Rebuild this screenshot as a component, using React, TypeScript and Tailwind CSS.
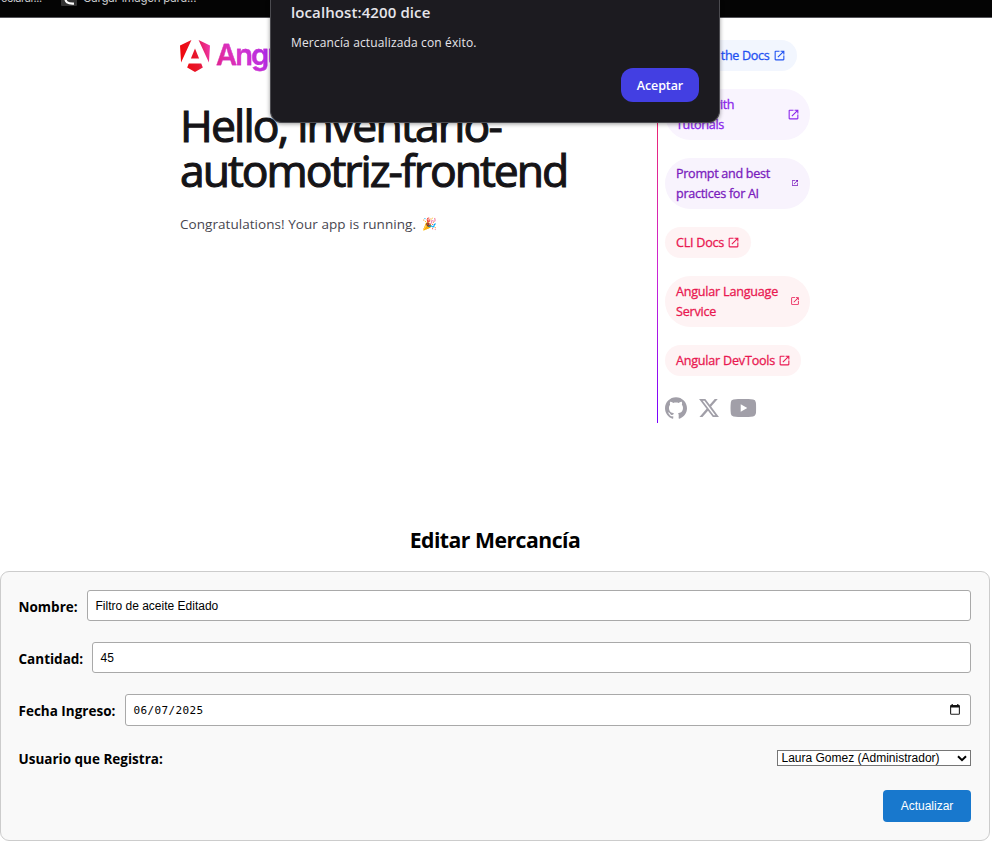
import React from "react";

const OPEN =
  "M200-120q-33 0-56.5-23.5T120-200v-560q0-33 23.5-56.5T200-840h280v80H200v560h560v-280h80v280q0 33-23.5 56.5T760-120H200Zm188-212-56-56 372-372H560v-80h280v280h-80v-144L388-332Z";

function OpenIcon({ size }: { size: number }) {
  return (
    <svg width={size} height={size} viewBox="0 -960 960 960" fill="currentColor" className="mb-px shrink-0">
      <path d={OPEN} />
    </svg>
  );
}

type PillProps = { lines: string[]; box: string; icon: number; text?: string };

function Pill({ lines, box, icon, text = "tracking-[-0.220px]" }: PillProps) {
  return (
    <a className={`flex items-center justify-between rounded-[26px] pl-[11px] ${box}`}>
      <span className={`whitespace-nowrap text-[12.6px] leading-[20px] [-webkit-text-stroke:0.3px_currentColor] ${text}`}>
        {lines.map((l) => (
          <span key={l} className="block">{l}</span>
        ))}
      </span>
      <OpenIcon size={icon} />
    </a>
  );
}

function Socials() {
  return (
    <div className="mt-[21px] flex h-[22px] items-center text-[#a19fa8]">
      <svg width="22" height="22" viewBox="0 0 24.61 24" fill="currentColor">
        <path d="M12.3047 0C5.50634 0 0 5.50942 0 12.3047C0 17.7423 3.52529 22.3535 8.41332 23.9787C9.02856 24.0946 9.25414 23.7142 9.25414 23.3871C9.25414 23.0949 9.24389 22.3207 9.23876 21.2953C5.81601 22.0377 5.09414 19.6444 5.09414 19.6444C4.53427 18.2243 3.72524 17.8449 3.72524 17.8449C2.61064 17.082 3.81137 17.0973 3.81137 17.0973C5.04697 17.1835 5.69604 18.3647 5.69604 18.3647C6.79321 20.2463 8.57636 19.7029 9.27978 19.3881C9.39052 18.5924 9.70736 18.0499 10.0591 17.7423C7.32641 17.4347 4.45429 16.3765 4.45429 11.6618C4.45429 10.3185 4.9311 9.22133 5.72065 8.36C5.58222 8.04931 5.16694 6.79833 5.82831 5.10337C5.82831 5.10337 6.85883 4.77319 9.2121 6.36459C10.1965 6.09082 11.2424 5.95546 12.2883 5.94931C13.3342 5.95546 14.3801 6.09082 15.3644 6.36459C17.7023 4.77319 18.7328 5.10337 18.7328 5.10337C19.3942 6.79833 18.9789 8.04931 18.8559 8.36C19.6403 9.22133 20.1171 10.3185 20.1171 11.6618C20.1171 16.3888 17.2409 17.4296 14.5031 17.7321C14.9338 18.1012 15.3337 18.8559 15.3337 20.0084C15.3337 21.6552 15.3183 22.978 15.3183 23.3779C15.3183 23.7009 15.5336 24.0854 16.1642 23.9623C21.0871 22.3484 24.6094 17.7341 24.6094 12.3047C24.6094 5.50942 19.0999 0 12.3047 0Z" />
      </svg>
      <svg width="20" height="18" viewBox="1.254 2.25 21.57 19.5" fill="currentColor" className="ml-[12px]">
        <path d="M18.244 2.25h3.308l-7.227 8.26 8.502 11.24H16.17l-5.214-6.817L4.99 21.75H1.68l7.73-8.835L1.254 2.25H8.08l4.713 6.231zm-1.161 17.52h1.833L7.084 4.126H5.117z" />
      </svg>
      <svg width="26" height="18" viewBox="0 0 26 18" fill="currentColor" className="ml-[11px] translate-x-[0.300px]">
        <path fillRule="evenodd" d="M3.2.5C6 0 9.500 0 13 0s7 0 9.800.5A3.200 3.200 0 0 1 25.500 3.200Q26 6 26 9t-.5 5.800a3.200 3.200 0 0 1-2.700 2.700C20 18 16.500 18 13 18s-7 0-9.800-.5A3.200 3.200 0 0 1 .5 14.800Q0 12 0 9t.5-5.800A3.200 3.200 0 0 1 3.200.5ZM10.400 5.200v7.600L17 9Z" />
      </svg>
    </div>
  );
}

function TopBar() {
  return (
    <div className="flex h-[18px] overflow-hidden border-b border-[#55555a] bg-[#040404] text-[#c9c9cc]">
      <span className="-mt-[11px] w-[61px] whitespace-nowrap pl-px font-['Inter',sans-serif] text-[11px] leading-[18px] tracking-[-0.400px]">eclarar...</span>
      <span className="-mt-[10px] flex h-4 w-4 justify-center rounded-[1px] bg-[#333]">
        <svg width="16" height="16" viewBox="0 0 16 16" fill="none" stroke="#fff" strokeWidth="2.200">
          <path d="M4.500 7.500C4 12 6.500 14 13 13.600" />
        </svg>
      </span>
      <span className="-mt-[11px] ml-[6px] whitespace-nowrap font-['Inter',sans-serif] text-[11.500px] leading-[18px] tracking-[-0.200px]">Cargar imagen para...</span>
    </div>
  );
}

function Brand() {
  return (
    <div className="flex h-8 items-center">
      <svg width="30" height="32" viewBox="0.662 0 22.676 24" className="shrink-0">
        <defs>
          <linearGradient id="mark" x1="0" y1="0.300" x2="1" y2="0.100">
            <stop offset="0" stopColor="#f0060b" />
            <stop offset="0.500" stopColor="#e7182f" />
            <stop offset="0.780" stopColor="#e9277c" />
            <stop offset="1" stopColor="#f23bb5" />
          </linearGradient>
        </defs>
        <path fill="url(#mark)" d="M16.712 17.711H7.288l-1.204 2.916L12 24l5.916-3.373-1.204-2.916ZM14.692 0l7.832 16.855.814-12.856L14.692 0ZM9.308 0 .662 3.999l.814 12.856L9.308 0Zm-.405 13.930h6.198L12 6.396 8.903 13.930Z" />
      </svg>
      <span className="-mt-[3px] ml-[6px] bg-[linear-gradient(65deg,#e6217a_0%,#d935cc_28%,#9f28ee_60%)] bg-clip-text font-['Inter',sans-serif] text-[29px] font-semibold leading-[40px] tracking-[-1.900px] text-transparent [-webkit-text-stroke:0.3px_#cf2fcf]">
        Angular
      </span>
    </div>
  );
}

function Hero() {
  return (
    <main className="flex h-[512px] pl-[180px]">
      <div className="w-[477px] pt-[22px]">
        <Brand />
        <h1 className="mt-[30px] whitespace-nowrap text-[44.500px] leading-[45px] text-[#151417] [-webkit-text-stroke:1.1px_#151417]">
          <span className="block tracking-[-1.850px]">Hello, inventario-</span>
          <span className="block tracking-[-2.020px]">automotriz-frontend</span>
        </h1>
        <p className="mt-[22px] flex items-center whitespace-nowrap text-[13.500px] leading-[20px] text-[#48464f]">
          <span className="w-[242px] tracking-[0.050px]">Congratulations! Your app is running.</span>
          <span className="text-[12px]">🎉</span>
        </p>
      </div>
      <div className="mt-[22px] h-[383px] w-px bg-[linear-gradient(180deg,#f0060b_0%,#e9277c_25%,#cc26d5_60%,#7702ff_100%)]" />
      <div className="ml-[7px] mt-[22px] flex flex-col items-start gap-[18px]">
        <Pill lines={["Explore the Docs"]} box="h-[31px] w-[132px] pr-[11px] bg-[#f2f6fe] text-[#1f51f2]" icon={13} text="tracking-[-0.340px]" />
        <Pill lines={["Learn with", "Tutorials"]} box="h-[51px] w-[145px] pr-[10px] bg-[#f9f4fe] text-[#8b26ec]" icon={13} text="tracking-[-0.380px]" />
        <Pill lines={["Prompt and best", "practices for AI"]} box="h-[51px] w-[145px] pr-[11px] bg-[#f8f3fd] text-[#7a1cbd]" icon={8} text="tracking-[-0.300px]" />
        <Pill lines={["CLI Docs"]} box="h-[31px] w-[86px] pr-[11px] bg-[#fef3f4] text-[#e91951]" icon={13} text="tracking-[-0.250px]" />
        <Pill lines={["Angular Language", "Service"]} box="h-[51px] w-[145px] pr-[10px] bg-[#fef3f4] text-[#e91951]" icon={10} />
        <Pill lines={["Angular DevTools"]} box="h-[31px] w-[136px] pr-[10px] bg-[#fef3f4] text-[#e91951]" icon={13} />
        <div className="-mt-[18px]"><Socials /></div>
      </div>
    </main>
  );
}

function Dialog() {
  return (
    <div className="absolute left-[270px] top-0 h-[123px] w-[450px] rounded-b-[12px] border border-t-0 border-[#4b4b50] bg-[#1c1b20] px-5 text-[#e6e5ea] shadow-[0_1px_4px_rgba(0,0,0,0.4)]">
      <div className="pt-px text-[15px] font-semibold leading-[22px] tracking-[0.100px]">localhost:4200 dice</div>
      <div className="mt-[11px] text-[12px] leading-[18px] tracking-[0.140px]">Mercancía actualizada con éxito.</div>
      <div className="mt-[16px] flex justify-end">
        <button className="h-[34px] w-[78px] rounded-[12px] bg-[#433fe2] pt-[2px] text-[12.500px] font-semibold tracking-[-0.100px] text-white">Aceptar</button>
      </div>
    </div>
  );
}

const label = "-ml-[0.500px] mr-[9.500px] whitespace-nowrap pt-[2px] text-[13.500px] font-bold leading-[20px]";
const field =
  "flex flex-1 items-center rounded-[3px] border border-[#a9a9a9] bg-white pl-[7.500px] pr-[8px] font-['Liberation_Sans',Arial,sans-serif] text-[12px]";

function EditForm() {
  return (
    <section>
      <h2 className="w-[990px] text-center text-[21.200px] font-bold leading-[20px] tracking-[-0.500px]">Editar Mercancía</h2>
      <form className="mt-[21px] h-[270px] w-[990px] rounded-[9px] border border-[#ccc] bg-[#f9f9f9] px-[18px] pt-[18px]">
        <div className="flex h-[31px] items-center">
          <label className={`${label} w-[59px]`}>Nombre:</label>
          <div className={`${field} h-[31px]`}>Filtro de aceite Editado</div>
        </div>
        <div className="mt-[21px] flex h-[31px] items-center">
          <label className={`${label} w-[64px]`}>Cantidad:</label>
          <div className={`${field} h-[31px]`}>45</div>
        </div>
        <div className="mt-[21px] flex h-[32px] items-center">
          <label className={`${label} w-[97px]`}>Fecha Ingreso:</label>
          <div className={`${field} h-[32px] justify-between`}>
            <span className="pt-[2px] font-['DejaVu_Sans_Mono',monospace] text-[11px] tracking-[0.380px]">06/07/2025</span>
            <svg width="10" height="11" viewBox="0 0 10 11" fill="none" className="mb-px mr-[2px]">
              <rect x="0.600" y="1.600" width="8.800" height="8.600" rx="0.800" stroke="#222" strokeWidth="1.100" />
              <path d="M.5 1.200h9v2.300h-9zM1.600 0h1.200v2H1.600zM7.200 0h1.200v2H7.200z" fill="#111" />
            </svg>
          </div>
        </div>
        <div className="mt-[24px] flex h-[16px] items-center justify-between">
          <label className={label}>Usuario que Registra:</label>
          <div className="flex h-[16px] w-[194px] items-center justify-between border border-[#767676] bg-white pl-[3.500px] pr-[3px] font-['Liberation_Sans',Arial,sans-serif] text-[12px] leading-[14px]">
            <span className="whitespace-nowrap">Laura Gomez (Administrador)</span>
            <svg width="10" height="7" viewBox="0 0 10 7" fill="none" stroke="#000" strokeWidth="2">
              <path d="M1 1.200 5 5.200 9 1.200" />
            </svg>
          </div>
        </div>
        <div className="mt-[24px] flex justify-end">
          <button type="button" className="h-[32px] w-[88px] rounded-[4px] bg-[#1878cd] font-['Liberation_Sans',Arial,sans-serif] text-[12px] text-white">Actualizar</button>
        </div>
      </form>
    </section>
  );
}

export default function App() {
  return (
    <div className="relative h-[845px] w-[992px] overflow-hidden bg-white font-['Open_Sans','Noto_Sans',sans-serif] text-black">
      <TopBar />
      <Hero />
      <EditForm />
      <Dialog />
    </div>
  );
}
